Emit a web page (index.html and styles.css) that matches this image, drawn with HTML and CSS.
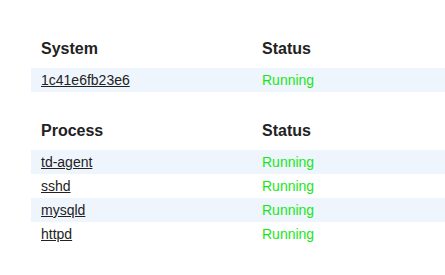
FILE: index.html
```html
<!DOCTYPE html>
<html>
<head>
<meta charset="utf-8">
<link rel="stylesheet" href="styles.css">
</head>
<body>
<div class="page">
  <div class="tbl">
    <div class="row head"><div class="cell">System</div><div class="cell">Status</div></div>
    <div class="row odd"><div class="cell"><a href="#">1c41e6fb23e6</a></div><div class="cell ok">Running</div></div>
  </div>
  <div class="tbl">
    <div class="row head"><div class="cell">Process</div><div class="cell">Status</div></div>
    <div class="row odd"><div class="cell"><a href="#">td-agent</a></div><div class="cell ok">Running</div></div>
    <div class="row"><div class="cell"><a href="#">sshd</a></div><div class="cell ok">Running</div></div>
    <div class="row odd"><div class="cell"><a href="#">mysqld</a></div><div class="cell ok">Running</div></div>
    <div class="row"><div class="cell"><a href="#">httpd</a></div><div class="cell ok">Running</div></div>
  </div>
</div>
</body>
</html>
```
FILE: styles.css
```css
html, body {
  margin: 0;
  padding: 0;
  background: #ffffff;
}
body {
  font-family: "Liberation Sans", Arial, sans-serif;
  color: #222222;
}
.page {
  padding: 39px 0 0 31px;
  display: flex;
  flex-direction: column;
  gap: 29px;
}
.tbl {
  display: flex;
  flex-direction: column;
}
.row {
  display: grid;
  grid-template-columns: 221px 1fr;
  font-size: 14px;
  line-height: 24px;
}
.row.odd {
  background: #eef5fc;
}
.cell {
  padding: 0 10px;
  white-space: nowrap;
}
.head {
  font-size: 16px;
  font-weight: bold;
  line-height: 20px;
}
.head .cell {
  padding-bottom: 9px;
}
a {
  color: #222222;
  text-decoration: underline;
}
.ok {
  color: #19e619;
}
```
